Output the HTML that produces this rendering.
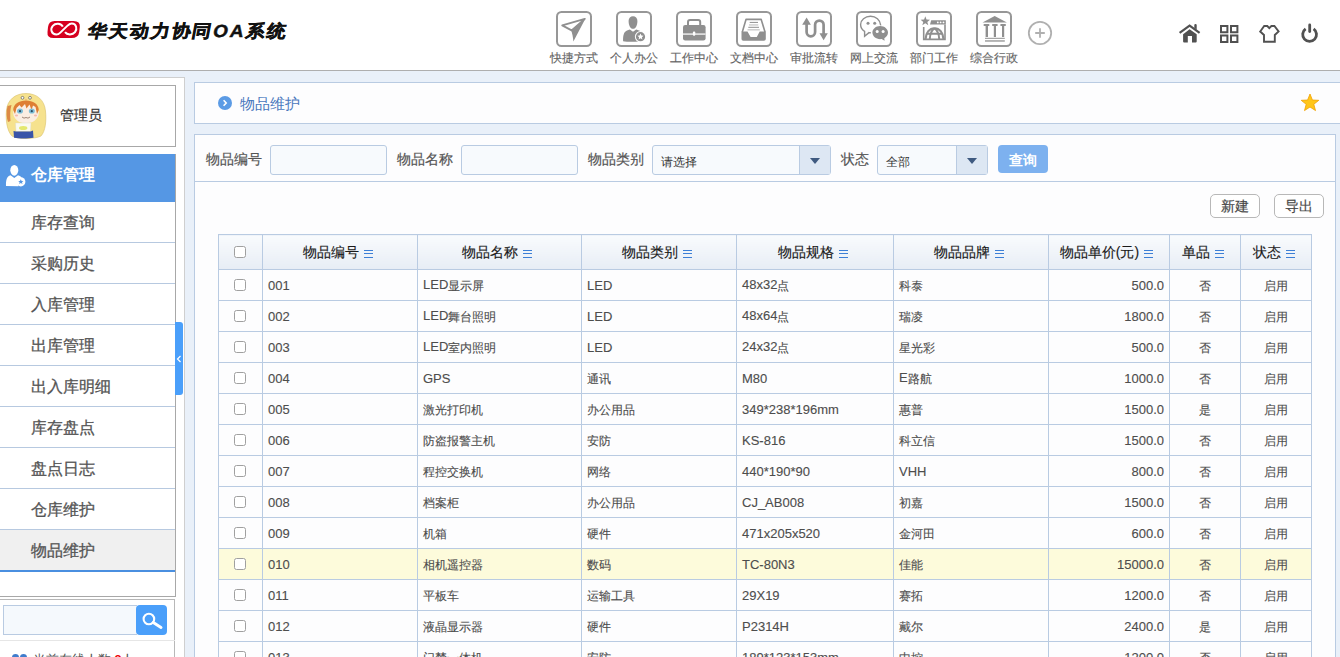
<!DOCTYPE html>
<html><head><meta charset="utf-8">
<style>
*{box-sizing:border-box;margin:0;padding:0}
html,body{width:1340px;height:657px;overflow:hidden}
body{position:relative;background:#e9f0f9;font-family:"Liberation Sans",sans-serif;color:#333}
.abs{position:absolute}
#hdr{left:0;top:0;width:1340px;height:71px;background:#fff;border-bottom:1px solid #aeaeae}
.logo{left:47px;top:21px;width:33px;height:17px;background:#d7001c;border-radius:8px}
.logotxt{left:88px;top:18px;font-size:19px;font-weight:bold;color:#111;white-space:nowrap;letter-spacing:1.9px;-webkit-text-stroke:0.5px #111;transform-origin:0 50%;transform:scale(1.0,0.92) skewX(-10deg)}
.nav{top:11px;width:36px;height:36px;border:3px solid #999;border-radius:6px}
.navl{top:50px;width:60px;text-align:center;font-size:12px;color:#666;white-space:nowrap;-webkit-text-stroke:0.15px #666}
.ri{top:22px;width:24px;height:24px}
/* sidebar */
#side{left:-1px;top:77px;width:186px;height:600px;background:#fff;border:1px solid #cfcfcf}
#user{left:-1px;top:85px;width:177px;height:62px;background:#fff;border:1px solid #a8a8a8}
#menu{left:-1px;top:154px;width:177px;height:443px;background:#fff;border-right:1px solid #a8a8a8;border-bottom:1px solid #a8a8a8}
.mh{left:0;top:0;width:176px;height:48px;background:#5597e4;color:#fff;font-size:16px;font-weight:bold}
.mi{left:0;width:176px;height:41px;border-bottom:1px solid #b7c9e0;font-size:15.5px;color:#555;-webkit-text-stroke:0.3px #555;padding-left:32px;line-height:42px}
.mi.sel{background:#f0f0f0;border-bottom:2px solid #4a8fe0;height:42px}
#tab{left:175px;top:322px;width:8px;height:73px;background:#4a9ffa;border-radius:0 3px 3px 0}
/* content */
#title{left:194px;top:82px;width:1150px;height:42px;background:#fdfdfe;border:1px solid #b9cbe2}
#panel{left:194px;top:134px;width:1142px;height:600px;background:#fdfdfe;border:1px solid #b9cbe2}
.lbl{font-size:14px;color:#555;top:151px;white-space:nowrap;-webkit-text-stroke:0.2px #555}
.inp{top:145px;height:30px;border:1px solid #b9cbe2;border-radius:3px;background:#f7fafd}
.sel2{top:145px;height:30px;border:1px solid #b9cbe2;border-radius:3px;background:#f7fafd;font-size:12px;color:#333;padding-left:8px;line-height:32px}
.arr{position:absolute;right:0;top:0;width:31px;height:28px;background:#dde7f3;border-left:1px solid #b9cbe2}
.arr:after{content:"";position:absolute;left:10px;top:12px;border-left:5px solid transparent;border-right:5px solid transparent;border-top:6px solid #3f5a80}
.btn2{top:194px;width:50px;height:24px;border:1px solid #b8b8b8;border-radius:5px;background:#fff;font-size:14px;color:#484848;-webkit-text-stroke:0.2px #484848;text-align:center;line-height:22px}
table{position:absolute;left:218px;top:234px;border-collapse:collapse;table-layout:fixed;font-size:13px;color:#444}
td,th{border:1px solid #b9cbe2;height:31px;padding:0 5px;white-space:nowrap;overflow:hidden}
th{height:35px;background:linear-gradient(#f9fbfd,#e7edf5);font-size:14px;font-weight:normal;color:#1a1a1a;-webkit-text-stroke:0.15px #1a1a1a;text-align:center;padding:1px 10px 0 5px}
td{background:#fdfdfe;color:#4d4d4d;-webkit-text-stroke:0.12px #4d4d4d}
.z{font-size:12px;position:relative;top:1px}
tr.hl td{background:#fdfbdb}
.cb{display:inline-block;width:12px;height:12px;border:1px solid #a0a0a0;border-radius:2.5px;background:#fff;vertical-align:middle}
.ham{display:inline-block;width:9px;height:8px;margin-left:5px;vertical-align:-1px;border-top:1px solid #3d7fd6;border-bottom:1px solid #3d7fd6;position:relative}
.ham:after{content:"";position:absolute;left:0;top:2px;width:9px;height:1px;background:#3d7fd6}
.r{text-align:right}
.c{text-align:center}
</style></head><body>
<div id="hdr" class="abs"></div>
<svg class="abs" style="left:44px;top:17px" width="40" height="25" viewBox="44 17 40 25"><path d="M54.5 21 H73.5 Q80.5 21 79.8 27 L79.2 32 Q78.5 38 71.5 38 H53.5 Q46.8 38 47.5 32 L48 27 Q48.7 21 54.5 21 Z" fill="#d6001f"/><path d="M62.8 26.6 C61 23.2 55.5 22.8 52.8 25.8 C50 29 51.5 34.5 56.3 34.5 C58 34.5 59.3 33.6 60.3 32.6 L67.8 25.4 C69 24.3 70.3 23.6 71.8 23.6 C76.5 23.6 77.5 29 75 32.2 C72.5 35.3 67 35 65 32.2" fill="none" stroke="#fff" stroke-width="2"/></svg>
<div class="abs logotxt">华天动力协同OA系统</div>

<svg class="abs" style="left:556px;top:11px" width="36" height="36" viewBox="0 0 36 36"><rect x="1" y="1" width="34" height="34" rx="4.5" fill="#fff" stroke="#979797" stroke-width="2"/><path d="M28.8 7.9 L6.2 14.4 L15.6 19.4 Z" fill="none" stroke="#8f8f8f" stroke-width="1.8" stroke-linejoin="round"/><path d="M29.6 7.2 L15 19.2 C16.3 22 17 26 17.4 30.4 Z" fill="#8f8f8f"/></svg><div class="abs navl" style="left:544px">快捷方式</div>
<svg class="abs" style="left:616px;top:11px" width="36" height="36" viewBox="0 0 36 36"><rect x="1" y="1" width="34" height="34" rx="4.5" fill="#fff" stroke="#979797" stroke-width="2"/><path d="M12.6 10 C12.6 6.8 14.5 5.2 17 5.2 C19.5 5.2 21.4 6.8 21.4 10 C21.4 14 19.8 17.8 17 17.8 C14.2 17.8 12.6 14 12.6 10 Z" fill="#8f8f8f"/><path d="M7.1 30.3 C7 25 7.6 21 11 19.6 L13.8 18.6 L17 20.8 L20.2 18.6 L23 19.6 C25 20.3 26 21 26.5 22 L23 30.5 C18 31 11 31 7.1 30.3 Z" fill="#8f8f8f"/><circle cx="24.5" cy="25.7" r="5.6" fill="#fff"/><circle cx="24.5" cy="25.7" r="4.6" fill="#8f8f8f"/><path d="M24.5 22.6 L25.4 24.6 L27.5 24.8 L25.9 26.2 L26.4 28.4 L24.5 27.3 L22.6 28.4 L23.1 26.2 L21.5 24.8 L23.6 24.6 Z" fill="#fff"/></svg><div class="abs navl" style="left:604px">个人办公</div>
<svg class="abs" style="left:676px;top:11px" width="36" height="36" viewBox="0 0 36 36"><rect x="1" y="1" width="34" height="34" rx="4.5" fill="#fff" stroke="#979797" stroke-width="2"/><rect x="12" y="9" width="12.2" height="7" rx="2" fill="none" stroke="#8f8f8f" stroke-width="2"/><rect x="7" y="14" width="22.6" height="15.4" rx="2.2" fill="#8f8f8f"/><rect x="7" y="22.3" width="22.6" height="1.6" fill="#e6e6e6"/><rect x="16.9" y="20.6" width="2.4" height="4.2" rx="1" fill="#fff"/></svg><div class="abs navl" style="left:664px">工作中心</div>
<svg class="abs" style="left:736px;top:11px" width="36" height="36" viewBox="0 0 36 36"><rect x="1" y="1" width="34" height="34" rx="4.5" fill="#fff" stroke="#979797" stroke-width="2"/><path d="M6.3 21 L10 8.4 H25.2 L29 21" fill="none" stroke="#8f8f8f" stroke-width="1.6" stroke-linejoin="round"/><path d="M5.5 20.4 H11.5 L14.6 26 H20.8 L23.7 20.4 H29.8 V28 Q29.8 29.8 28 29.8 H7.3 Q5.5 29.8 5.5 28 Z" fill="#8f8f8f"/><rect x="13.7" y="10.9" width="8.3" height="1" fill="#8f8f8f"/><rect x="13" y="13.4" width="9.3" height="1.1" fill="#bdbdbd"/><rect x="12.3" y="15.8" width="10.7" height="1" fill="#8f8f8f"/><rect x="11.5" y="18.3" width="12.3" height="1.1" fill="#bdbdbd"/></svg><div class="abs navl" style="left:724px">文档中心</div>
<svg class="abs" style="left:796px;top:11px" width="36" height="36" viewBox="0 0 36 36"><rect x="1" y="1" width="34" height="34" rx="4.5" fill="#fff" stroke="#979797" stroke-width="2"/><path d="M10.6 13 V21.1 A4.25 4.25 0 0 0 19.1 21.1 V13.8 A4.25 4.25 0 0 1 27.6 13.8 V23" fill="none" stroke="#8f8f8f" stroke-width="2.7"/><path d="M10.6 6.6 L14.9 13.8 H6.2 Z" fill="#8f8f8f"/><path d="M23.5 22.3 H31.8 L27.6 29.3 Z" fill="#8f8f8f"/></svg><div class="abs navl" style="left:784px">审批流转</div>
<svg class="abs" style="left:856px;top:11px" width="36" height="36" viewBox="0 0 36 36"><rect x="1" y="1" width="34" height="34" rx="4.5" fill="#fff" stroke="#979797" stroke-width="2"/><path d="M24.8 14.6 C24.3 8.8 19.8 5.3 14.5 5.3 C9 5.3 4.6 9 4.6 13.6 C4.6 16.6 6.2 18.9 8.6 20.3 L8.6 25.2 L13 21.6 C13.6 21.7 14.2 21.8 14.8 21.8" fill="none" stroke="#8f8f8f" stroke-width="1.4"/><circle cx="12" cy="12.3" r="1.5" fill="#8f8f8f"/><circle cx="18.7" cy="12.3" r="1.5" fill="#8f8f8f"/><ellipse cx="24.2" cy="21.6" rx="8.4" ry="7.2" fill="#fff"/><path d="M24.2 15 C28.5 15 32 17.9 32 21.6 C32 24 30.6 26 28.3 27.2 L28.6 29.8 L25.6 28.1 C25.1 28.2 24.7 28.2 24.2 28.2 C19.9 28.2 16.4 25.3 16.4 21.6 C16.4 17.9 19.9 15 24.2 15 Z" fill="#8f8f8f"/><circle cx="21.2" cy="20.6" r="1.5" fill="#fff"/><circle cx="27.1" cy="20.6" r="1.5" fill="#fff"/></svg><div class="abs navl" style="left:844px">网上交流</div>
<svg class="abs" style="left:916px;top:11px" width="36" height="36" viewBox="0 0 36 36"><rect x="1" y="1" width="34" height="34" rx="4.5" fill="#fff" stroke="#979797" stroke-width="2"/><path d="M9.3 5.3 L10.5 8.6 L14 8.7 L11.3 10.9 L12.3 14.3 L9.3 12.3 L6.3 14.3 L7.3 10.9 L4.6 8.7 L8.1 8.6 Z" fill="#8f8f8f"/><path d="M15.2 9.3 H29.8 V13.5 H14 Z" fill="#8f8f8f"/><circle cx="21.8" cy="11.4" r="0.9" fill="#fff"/><circle cx="24.6" cy="11.4" r="0.9" fill="#fff"/><circle cx="27.5" cy="11.4" r="0.9" fill="#fff"/><path d="M7.7 16 V28.4 H29 V13.5" fill="none" stroke="#8f8f8f" stroke-width="1.6"/><path d="M9.5 28.2 C10 21.5 13.5 17.3 18.5 17.3 C23.5 17.3 27 21.5 27.5 28.2" fill="none" stroke="#8f8f8f" stroke-width="2.2"/><path d="M10.5 22.7 H26.5 M18.5 17.3 C15.5 19.5 14 23.5 13.8 28 M18.5 17.3 C21.5 19.5 23 23.5 23.2 28" fill="none" stroke="#8f8f8f" stroke-width="2"/></svg><div class="abs navl" style="left:904px">部门工作</div>
<svg class="abs" style="left:976px;top:11px" width="36" height="36" viewBox="0 0 36 36"><rect x="1" y="1" width="34" height="34" rx="4.5" fill="#fff" stroke="#979797" stroke-width="2"/><path d="M18.7 5 L30.9 11.4 H6.5 Z" fill="#8f8f8f"/><rect x="7.5" y="13.1" width="6" height="1.9" rx="0.9" fill="#8f8f8f"/><rect x="16" y="13.1" width="5.8" height="1.9" rx="0.9" fill="#8f8f8f"/><rect x="24.2" y="13.1" width="5.8" height="1.9" rx="0.9" fill="#8f8f8f"/><rect x="9.6" y="14.5" width="2.4" height="11.5" fill="#8f8f8f"/><rect x="17.8" y="14.5" width="2.2" height="11.5" fill="#8f8f8f"/><rect x="26" y="14.5" width="2.2" height="11.5" fill="#8f8f8f"/><rect x="9" y="26.8" width="19.8" height="1" fill="#8f8f8f"/><rect x="9" y="29" width="19.8" height="1.9" fill="#b3b3b3"/></svg><div class="abs navl" style="left:964px">综合行政</div>
<svg class="abs" style="left:1027px;top:20px" width="26" height="26" viewBox="0 0 26 26"><circle cx="13" cy="13" r="11.2" fill="none" stroke="#b0b0b0" stroke-width="1.8"/><path d="M13 8.2 V17.8 M8.2 13 H17.8" stroke="#b0b0b0" stroke-width="1.8"/></svg>
<svg class="abs" style="left:1175px;top:18px" width="150" height="30" viewBox="1175 18 150 30"><path d="M1179.6 32.9 L1189.6 25.6 L1199.6 32.9" fill="none" stroke="#515151" stroke-width="2.2"/><path d="M1194.3 25 Q1194.3 24 1195.5 24 Q1196.7 24 1196.7 25 V29.8 L1194.3 28 Z" fill="#515151"/><path d="M1189.6 29.2 L1196.7 34.3 V41.6 Q1196.7 42.6 1195.7 42.6 H1192 V36 H1187.8 V42.6 H1184.1 Q1183.1 42.6 1183.1 41.6 V34.3 Z" fill="#515151"/><path d="M1221 25.9 h6.4 v6.4 h-6.4 Z M1231 25.9 h6.4 v6.4 h-6.4 Z M1221 35.6 h6.4 v6.4 h-6.4 Z M1231 35.6 h6.4 v6.4 h-6.4 Z" fill="none" stroke="#515151" stroke-width="2"/><path d="M1264.2 26 H1267.3 L1269.3 28.2 L1271.4 26 H1274.4 L1278.6 31.5 L1274.8 35 V41.7 H1264 V35 L1260.2 31.5 Z" fill="none" stroke="#515151" stroke-width="1.9" stroke-linejoin="miter"/><path d="M1305.6 28.9 A6.9 6.9 0 1 0 1313.6 28.9" fill="none" stroke="#515151" stroke-width="2.8"/><path d="M1309.7 24.9 V31.5" stroke="#515151" stroke-width="2.8" stroke-linecap="round"/></svg>
<div id="side" class="abs"></div>
<div id="user" class="abs"></div>
<svg class="abs" style="left:4px;top:92px" width="46" height="48" viewBox="4 92 46 48">
<path d="M26 93.5 C37 93.5 44.5 100 45.5 111 C46.5 121 45.5 131 41 136 C36 139 17 139.5 12 136 C7 131 5.5 120 6.5 110 C7.5 100 15 93.5 26 93.5 Z" fill="#f6e28e" stroke="#d9c068" stroke-width="0.6"/>
<path d="M7.5 106 C6 112 6.5 118 8 122 L10.5 121 C10 115 10 110 11.5 105 Z" fill="#dd8a45"/>
<ellipse cx="26" cy="112.5" rx="12.8" ry="10.8" fill="#fbeee2"/>
<path d="M13.2 110 C13.5 104 19 100.5 26 100.5 C33 100.5 38.5 104 38.8 110 L37 114 L35.5 107 L33 105.5 L31.5 110 L29.5 104.5 L26.5 108.5 L25 104 L21.5 107.5 L19.5 105 L16.5 108 L15 114 Z" fill="#de7f34"/>
<ellipse cx="20" cy="111" rx="3" ry="2.6" fill="#7fbfd8"/><ellipse cx="31.8" cy="111" rx="3" ry="2.6" fill="#7fbfd8"/>
<circle cx="20" cy="111.2" r="1.1" fill="#2a4a60"/><circle cx="31.8" cy="111.2" r="1.1" fill="#2a4a60"/>
<ellipse cx="16.5" cy="115.5" rx="1.6" ry="0.9" fill="#f4b8b0"/><ellipse cx="35.5" cy="115.5" rx="1.6" ry="0.9" fill="#f4b8b0"/>
<path d="M22 117 Q24 119 26 117.5 Q28 119 30 117" fill="none" stroke="#7a5a4a" stroke-width="0.7"/>
<circle cx="22.5" cy="97.8" r="1.4" fill="#fff" stroke="#444" stroke-width="0.6"/><circle cx="30" cy="97.8" r="1.4" fill="#fff" stroke="#444" stroke-width="0.6"/>
<path d="M25.4 99.5 L26.6 99.5 L26 100.6 Z" fill="#e06060"/>
<path d="M15.5 123 H31 L30.5 131.5 H16 Z" fill="#fafaf0" stroke="#d8d8c8" stroke-width="0.4"/><ellipse cx="23.2" cy="128" rx="4.2" ry="2" fill="#e4e86e"/>
<path d="M13.5 131 L16 131.5 H30.5 L33 130.5 L33.5 137.8 C28 138.8 19 138.8 14 137.8 Z" fill="#3a55a8"/>
</svg>
<div class="abs" style="left:60px;top:107px;font-size:14px;color:#333;-webkit-text-stroke:0.2px #333">管理员</div>
<div id="menu" class="abs">
 <div class="abs mh"><svg class="abs" style="left:0;top:0" width="30" height="48" viewBox="0 154 30 48"><ellipse cx="15.3" cy="170.3" rx="4" ry="5.4" fill="#fff"/><path d="M7 186 C6.8 180 7.8 176.5 11.5 175.3 L15.3 178 L19 175.3 C21 176 22 176.8 22.6 177.5 C19.5 179.5 18.5 183 19.5 186.2 Z" fill="#fff"/><circle cx="21.8" cy="181.8" r="4.6" fill="#fff"/><path d="M21.8 179.2 L22.6 180.9 L24.4 181 L23 182.2 L23.5 184 L21.8 183 L20.1 184 L20.6 182.2 L19.2 181 L21 180.9 Z" fill="#5597e4"/></svg><span class="abs" style="left:32px;top:11px">仓库管理</span></div>
 <div class="abs mi" style="top:48px">库存查询</div>
 <div class="abs mi" style="top:89px">采购历史</div>
 <div class="abs mi" style="top:130px">入库管理</div>
 <div class="abs mi" style="top:171px">出库管理</div>
 <div class="abs mi" style="top:212px">出入库明细</div>
 <div class="abs mi" style="top:253px">库存盘点</div>
 <div class="abs mi" style="top:294px">盘点日志</div>
 <div class="abs mi" style="top:335px">仓库维护</div>
 <div class="abs mi sel" style="top:376px">物品维护</div>
</div>
<div class="abs" style="left:-1px;top:599px;width:176px;height:70px;background:#fff;border:1px solid #b8b8b8"></div>
<div class="abs" style="left:3px;top:605px;width:134px;height:30px;background:#f5f9fd;border:1px solid #b9cbe2;border-right:none"></div>
<div class="abs" style="left:136px;top:605px;width:31px;height:30px;background:#4a9ffa;border-radius:4px"><svg class="abs" style="left:0;top:0" width="31" height="30" viewBox="136 605 31 30"><circle cx="148.9" cy="619" r="5.3" fill="none" stroke="#fff" stroke-width="2.1"/><path d="M153.3 622.6 L161 627.4" stroke="#fff" stroke-width="3" stroke-linecap="round"/></svg></div>
<div class="abs" style="left:0;top:640px;width:175px;height:1px;background:#e6e6e6"></div>
<div class="abs" style="left:12px;top:654px;width:7px;height:7px;border-radius:50%;background:#3f7ccc"></div><div class="abs" style="left:20px;top:654px;width:7px;height:7px;border-radius:50%;background:#3f7ccc"></div>
<div class="abs" style="left:33px;top:652px;font-size:12.5px;color:#555;white-space:nowrap">当前在线人数 <span style="color:#e00;font-weight:bold">8</span>人</div>
<div id="tab" class="abs"><svg class="abs" style="left:1px;top:33px" width="6" height="8" viewBox="0 0 6 8"><path d="M4.5 1 L1.5 4 L4.5 7" fill="none" stroke="#fff" stroke-width="1.2"/></svg></div>

<div id="title" class="abs"></div>
<svg class="abs" style="left:218px;top:96px" width="14" height="14" viewBox="0 0 14 14"><circle cx="7" cy="7" r="7" fill="#5b9be5"/><path d="M5.6 4.3 L8.2 7 L5.6 9.7" fill="none" stroke="#fff" stroke-width="1.6"/></svg>
<svg class="abs" style="left:1300px;top:93px" width="20" height="19" viewBox="0 0 20 19"><path d="M10 1 L12.4 7 L18.8 7.3 L13.8 11.3 L15.5 17.6 L10 14 L4.5 17.6 L6.2 11.3 L1.2 7.3 L7.6 7 Z" fill="#ffc61a" stroke="#f0a000" stroke-width="0.8" stroke-linejoin="round"/></svg>
<div class="abs" style="left:240px;top:95px;font-size:15px;color:#4a78bd">物品维护</div>

<div id="panel" class="abs"></div>
<div class="abs" style="left:195px;top:181px;width:1140px;height:1px;background:#b9cbe2"></div>
<div class="abs lbl" style="left:206px">物品编号</div>
<div class="abs inp" style="left:270px;width:117px"></div>
<div class="abs lbl" style="left:397px">物品名称</div>
<div class="abs inp" style="left:461px;width:117px"></div>
<div class="abs lbl" style="left:588px">物品类别</div>
<div class="abs sel2" style="left:652px;width:179px">请选择<div class="arr"></div></div>
<div class="abs lbl" style="left:841px">状态</div>
<div class="abs sel2" style="left:877px;width:111px">全部<div class="arr"></div></div>
<div class="abs" style="left:998px;top:145px;width:50px;height:28px;border-radius:4px;background:#7db1ef;color:#fff;font-size:14px;font-weight:bold;text-align:center;line-height:30px">查询</div>
<div class="abs btn2" style="left:1210px">新建</div>
<div class="abs btn2" style="left:1274px">导出</div>

<table>
<colgroup><col style="width:44px"><col style="width:155px"><col style="width:164px"><col style="width:155px"><col style="width:157px"><col style="width:155px"><col style="width:121px"><col style="width:71px"><col style="width:71px"></colgroup>
<tr><th style="padding:0"><span class="cb" style="position:relative;top:-1px;left:-1px"></span></th><th>物品编号<i class="ham"></i></th><th>物品名称<i class="ham"></i></th><th>物品类别<i class="ham"></i></th><th>物品规格<i class="ham"></i></th><th>物品品牌<i class="ham"></i></th><th>物品单价(元)<i class="ham"></i></th><th>单品<i class="ham"></i></th><th>状态<i class="ham"></i></th></tr>
<tr><td class="c" style="padding:0"><span class="cb" style="position:relative;left:-1px;top:-1px"></span></td><td>001</td><td>LED<span class="z">显示屏</span></td><td>LED</td><td>48x32<span class="z">点</span></td><td><span class="z">科泰</span></td><td class="r">500.0</td><td class="c"><span class="z">否</span></td><td class="c"><span class="z">启用</span></td></tr>
<tr><td class="c" style="padding:0"><span class="cb" style="position:relative;left:-1px;top:-1px"></span></td><td>002</td><td>LED<span class="z">舞台照明</span></td><td>LED</td><td>48x64<span class="z">点</span></td><td><span class="z">瑞凌</span></td><td class="r">1800.0</td><td class="c"><span class="z">否</span></td><td class="c"><span class="z">启用</span></td></tr>
<tr><td class="c" style="padding:0"><span class="cb" style="position:relative;left:-1px;top:-1px"></span></td><td>003</td><td>LED<span class="z">室内照明</span></td><td>LED</td><td>24x32<span class="z">点</span></td><td><span class="z">星光彩</span></td><td class="r">500.0</td><td class="c"><span class="z">否</span></td><td class="c"><span class="z">启用</span></td></tr>
<tr><td class="c" style="padding:0"><span class="cb" style="position:relative;left:-1px;top:-1px"></span></td><td>004</td><td>GPS</td><td><span class="z">通讯</span></td><td>M80</td><td>E<span class="z">路航</span></td><td class="r">1000.0</td><td class="c"><span class="z">否</span></td><td class="c"><span class="z">启用</span></td></tr>
<tr><td class="c" style="padding:0"><span class="cb" style="position:relative;left:-1px;top:-1px"></span></td><td>005</td><td><span class="z">激光打印机</span></td><td><span class="z">办公用品</span></td><td>349*238*196mm</td><td><span class="z">惠普</span></td><td class="r">1500.0</td><td class="c"><span class="z">是</span></td><td class="c"><span class="z">启用</span></td></tr>
<tr><td class="c" style="padding:0"><span class="cb" style="position:relative;left:-1px;top:-1px"></span></td><td>006</td><td><span class="z">防盗报警主机</span></td><td><span class="z">安防</span></td><td>KS-816</td><td><span class="z">科立信</span></td><td class="r">1500.0</td><td class="c"><span class="z">否</span></td><td class="c"><span class="z">启用</span></td></tr>
<tr><td class="c" style="padding:0"><span class="cb" style="position:relative;left:-1px;top:-1px"></span></td><td>007</td><td><span class="z">程控交换机</span></td><td><span class="z">网络</span></td><td>440*190*90</td><td>VHH</td><td class="r">800.0</td><td class="c"><span class="z">否</span></td><td class="c"><span class="z">启用</span></td></tr>
<tr><td class="c" style="padding:0"><span class="cb" style="position:relative;left:-1px;top:-1px"></span></td><td>008</td><td><span class="z">档案柜</span></td><td><span class="z">办公用品</span></td><td>CJ_AB008</td><td><span class="z">初嘉</span></td><td class="r">1500.0</td><td class="c"><span class="z">否</span></td><td class="c"><span class="z">启用</span></td></tr>
<tr><td class="c" style="padding:0"><span class="cb" style="position:relative;left:-1px;top:-1px"></span></td><td>009</td><td><span class="z">机箱</span></td><td><span class="z">硬件</span></td><td>471x205x520</td><td><span class="z">金河田</span></td><td class="r">600.0</td><td class="c"><span class="z">否</span></td><td class="c"><span class="z">启用</span></td></tr>
<tr class="hl"><td class="c" style="padding:0"><span class="cb" style="position:relative;left:-1px;top:-1px"></span></td><td>010</td><td><span class="z">相机遥控器</span></td><td><span class="z">数码</span></td><td>TC-80N3</td><td><span class="z">佳能</span></td><td class="r">15000.0</td><td class="c"><span class="z">否</span></td><td class="c"><span class="z">启用</span></td></tr>
<tr><td class="c" style="padding:0"><span class="cb" style="position:relative;left:-1px;top:-1px"></span></td><td>011</td><td><span class="z">平板车</span></td><td><span class="z">运输工具</span></td><td>29X19</td><td><span class="z">赛拓</span></td><td class="r">1200.0</td><td class="c"><span class="z">否</span></td><td class="c"><span class="z">启用</span></td></tr>
<tr><td class="c" style="padding:0"><span class="cb" style="position:relative;left:-1px;top:-1px"></span></td><td>012</td><td><span class="z">液晶显示器</span></td><td><span class="z">硬件</span></td><td>P2314H</td><td><span class="z">戴尔</span></td><td class="r">2400.0</td><td class="c"><span class="z">是</span></td><td class="c"><span class="z">启用</span></td></tr>
<tr><td class="c" style="padding:0"><span class="cb" style="position:relative;left:-1px;top:-1px"></span></td><td>013</td><td><span class="z">门禁一体机</span></td><td><span class="z">安防</span></td><td>189*123*153mm</td><td><span class="z">中控</span></td><td class="r">1200.0</td><td class="c"><span class="z">否</span></td><td class="c"><span class="z">启用</span></td></tr>
</table>
</body></html>
